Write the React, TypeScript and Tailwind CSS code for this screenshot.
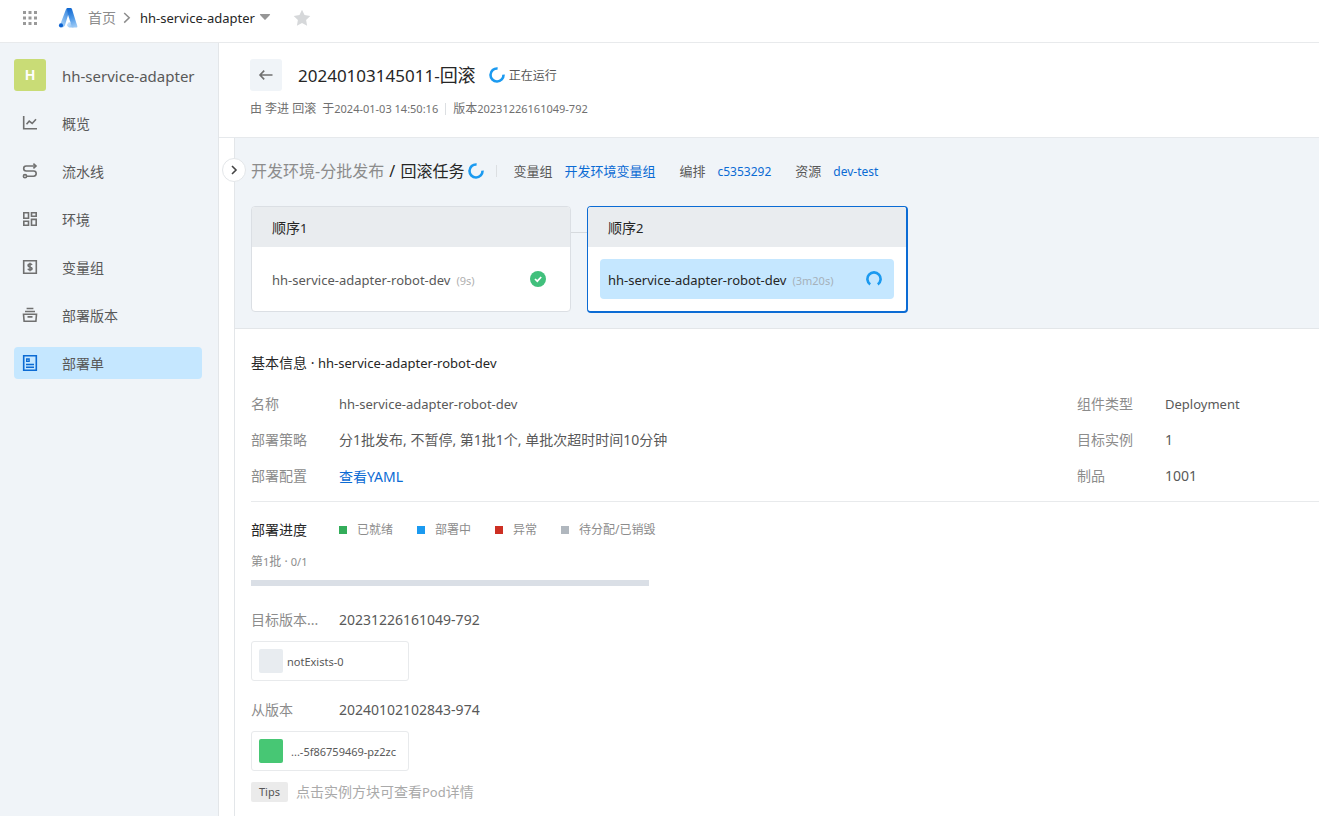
import type { ReactNode } from "react";

const LATIN_12 = "text-[11px]";

function Spinner({ className, dash }: { className: string; dash: string }) {
  return (
    <svg viewBox="0 0 16 16" className={className} fill="none" aria-hidden="true">
      <path d={dash} stroke="#1b9af0" strokeWidth="2.6" />
    </svg>
  );
}

const ARC_RIGHT_OPEN = "M8.6 1.500A6.500 6.500 0 1 0 14.500 7.600";
const ARC_BOTTOM_OPEN = "M4.2 13.4A6.6 6.6 0 1 1 11.8 13.4";

function Icon({ children }: { children: ReactNode }) {
  return (
    <svg viewBox="0 0 16 16" className="size-4 shrink-0" fill="none" stroke="currentColor" strokeWidth="1.6" aria-hidden="true">
      {children}
    </svg>
  );
}

const NAV = [
  {
    label: "概览",
    icon: (
      <Icon>
        <path d="M1.7 1v12.8H15" />
        <path d="M4.5 9.3 7.2 6.2l3 2.3L14 4.3" />
      </Icon>
    ),
  },
  {
    label: "流水线",
    icon: (
      <Icon>
        <path d="M13.5 3H4.2a2.5 2.5 0 0 0 0 5h7.4a2.6 2.6 0 0 1 0 5.2H4.6" />
        <path d="M11.4.6 14 3l-2.6 2.4" />
        <circle cx="3" cy="13.2" r="1.6" />
      </Icon>
    ),
  },
  {
    label: "环境",
    icon: (
      <Icon>
        <path d="M1.800 1.800h4.700v5.400H1.800zM9.500 1.800h4.700v3.400H9.500zM1.800 10.300h4.700v3.900H1.800zM9.500 8.400h4.700v5.800H9.500z" />
      </Icon>
    ),
  },
  {
    label: "变量组",
    icon: (
      <Icon>
        <path d="M1.7 1.7h12.6v12.6H1.7z" />
        <path d="M10 5.9C9.6 5.2 9 5 8 5c-1.2 0-1.9.5-1.9 1.4C6.100 7.400 7 7.700 8 8c1.200.300 2 .700 2 1.600S9.200 11 8 11s-1.800-.400-2.100-1.200M8 3.800v8.400" />
      </Icon>
    ),
  },
  {
    label: "部署版本",
    icon: (
      <Icon>
        <path d="M4.600 1.500h6.800M3 4.500h10M1.500 7.200h13l-.600 7H2.100zM5.500 9.900h5" />
      </Icon>
    ),
  },
  {
    label: "部署单",
    active: true,
    icon: (
      <Icon>
        <path d="M1.700.800h12.600v14.400H1.700z" />
        <path d="M4.700 4h2.400v2.400H4.700z" strokeWidth="1.400" />
        <path d="M4 9.500h8M4 12.200h8" />
      </Icon>
    ),
  },
];

function Topbar() {
  return (
    <header className="flex h-[43px] items-center border-b border-[#e8eaec] bg-white pb-1.5 pl-[22px]">
      <button type="button" aria-label="应用列表" className="text-[#9a9a9a]">
        <svg viewBox="0 0 16 16" className="size-4" fill="currentColor" aria-hidden="true">
          <path d="M1 1h3v3H1zM6.500 1h3v3h-3zM12 1h3v3h-3zM1 6.500h3v3H1zM6.500 6.500h3v3h-3zM12 6.500h3v3h-3zM1 12h3v3H1zM6.500 12h3v3h-3zM12 12h3v3h-3z" />
        </svg>
      </button>
      <a href="#home" aria-label="Logo" className="ml-5">
        <svg viewBox="0 0 20 22" className="h-[22px] w-5" aria-hidden="true">
          <defs>
            <linearGradient id="leg" x1="0.300" y1="0" x2="0.500" y2="1">
              <stop offset="0" stopColor="#0f66d0" />
              <stop offset="0.550" stopColor="#4f9ae8" />
              <stop offset="1" stopColor="#9cc9f5" />
            </linearGradient>
            <linearGradient id="arm" x1="0.800" y1="0" x2="0.200" y2="1">
              <stop offset="0" stopColor="#2f80dc" />
              <stop offset="1" stopColor="#a9d4fa" />
            </linearGradient>
            <linearGradient id="fold" x1="0" y1="0" x2="1" y2="0.600">
              <stop offset="0" stopColor="#d3e8fc" />
              <stop offset="1" stopColor="#8dc0f4" />
            </linearGradient>
          </defs>
          <path d="M8 2.200C8.300 1.400 9 1 9.800 1h2.400L7.200 17.500c-.500 1.700-1.500 2.700-2.900 3L2.600 16.500z" fill="url(#arm)" />
          <path d="M10.600 15.200q3-.700 5 5.400h-3.200c-1.600 0-2.600-.800-3.600-2.600z" fill="url(#fold)" />
          <path d="M9 1.300Q9.300 1 9.800 1h2.400c.900 0 1.600.500 1.900 1.400l5.200 16.500c.300 1-.300 1.700-1.300 1.700h-2.600c-.800 0-1.300-.400-1.600-1.200L9.800 7z" fill="url(#leg)" />
          <circle cx="3" cy="18.400" r="2.100" fill="#0b62d0" />
        </svg>
      </a>
      <nav className="flex items-center text-sm text-[#262626]">
        <a href="#home" className="ml-2.5 text-[#8c8c8c]">首页</a>
        <svg viewBox="0 0 8 12" className="ml-[7px] h-3 w-2" fill="none" stroke="#8c8c8c" strokeWidth="1.500" aria-hidden="true">
          <path d="m1.200 1 5 4.800-5 4.800" />
        </svg>
        <button type="button" className="ml-[9px] flex items-center gap-1 text-[13px]">
          hh-service-adapter
          <svg viewBox="0 0 12 8" className="mb-0.5 h-2 w-3" fill="#969696" aria-hidden="true">
            <path d="M1.500 1h9q1 .2.400 1L6.600 6.600q-.600.600-1.200 0L1.100 2q-.600-.800.400-1z" />
          </svg>
        </button>
      </nav>
      <button type="button" aria-label="收藏" className="ml-[22px]">
        <svg viewBox="0 0 18 18" className="size-[18px]" fill="#d6d8da" aria-hidden="true">
          <path d="m9 .8 2.500 5.300 5.800.800-4.200 4.100 1 5.800L9 14l-5.100 2.800 1-5.800L.700 6.900l5.800-.800z" />
        </svg>
      </button>
    </header>
  );
}

function Sidebar() {
  return (
    <aside className="w-[219px] shrink-0 border-r border-[#e3e6e9] bg-[#f0f4f8] pt-4 pr-4 pl-3.5">
      <div className="flex h-8 items-center gap-4">
        <span className="flex size-8 items-center justify-center rounded-[3px] bg-[#c9dc76] font-['Liberation_Sans'] text-sm font-bold text-white">H</span>
        <span className="pt-0.5 text-[15px] whitespace-nowrap text-[#595959]">hh-service-adapter</span>
      </div>
      <nav className="mt-4 flex flex-col gap-4">
        {NAV.map((item) => (
          <a
            key={item.label}
            href="#nav"
            className={
              item.active
                ? "flex h-8 items-center gap-6 rounded-[4px] bg-[#c5e7ff] pl-2 text-[#0b6bd4]"
                : "flex h-8 items-center gap-6 pl-2 text-[#707070]"
            }
          >
            {item.icon}
            <span className="pt-0.5 text-sm text-[#595959]">{item.label}</span>
          </a>
        ))}
      </nav>
    </aside>
  );
}

function RunHeader() {
  return (
    <div className="flex h-[95px] flex-col border-b border-[#e6e9ec] bg-white pt-4 pl-[31px]">
      <div className="flex h-8 items-center">
        <button type="button" aria-label="返回" className="flex size-8 items-center justify-center rounded-[3px] bg-[#f0f4f8]">
          <svg viewBox="0 0 16 12" className="h-3 w-4" fill="none" stroke="#707070" strokeWidth="1.600" aria-hidden="true">
            <path d="M14.500 6H2.200M6.200 1.600 2 6l4.200 4.400" />
          </svg>
        </button>
        <h1 className="ml-4 text-lg text-[#262626]">
          <span className="text-[17px]">20240103145011-</span>回滚
        </h1>
        <Spinner className="ml-[13px] size-4" dash={ARC_RIGHT_OPEN} />
        <span className="ml-1 pt-0.5 text-xs text-[#595959]">正在运行</span>
      </div>
      <div className="mt-2 flex h-5 items-center text-xs whitespace-pre text-[#707070]">
        <span>由 李进 回滚</span>
        <span className="ml-1.5">于<span className={LATIN_12}>2024-01-03 14:50:16</span></span>
        <span className="mx-[7px] h-3 w-px bg-[#dcdfe2]" />
        <span>版本<span className={LATIN_12}>20231226161049-792</span></span>
      </div>
    </div>
  );
}

function Pipeline() {
  return (
    <section className="border-b border-[#e3e6e9] bg-[#f0f4f8] pt-[21px] pb-[15px] pl-4">
      <div className="flex h-6 items-center text-[13px] whitespace-nowrap text-[#595959]">
        <h2 className="text-base text-[#262626]">
          <span className="text-[#8c8c8c]">开发环境-分批发布</span>{" "}
          <span className="px-px">/</span> 回滚任务
        </h2>
        <Spinner className="ml-1 size-4" dash={ARC_RIGHT_OPEN} />
        <span className="mr-4 ml-3 h-3 w-px bg-[#dcdfe2]" />
        <dl className="flex items-center gap-6 pt-0.5">
          <div className="flex items-center gap-3">
            <dt>变量组</dt>
            <dd><a href="#vars" className="text-[#0b6bd4]">开发环境变量组</a></dd>
          </div>
          <div className="flex items-center gap-3">
            <dt>编排</dt>
            <dd><a href="#layout" className="text-xs text-[#0b6bd4]">c5353292</a></dd>
          </div>
          <div className="flex items-center gap-3">
            <dt>资源</dt>
            <dd><a href="#resource" className="text-xs text-[#0b6bd4]">dev-test</a></dd>
          </div>
        </dl>
      </div>
      <div className="mt-[23px] flex">
        <article className="h-[106px] w-80 overflow-hidden rounded-[4px] border border-[#dbdfe4] bg-white">
          <h3 className="flex h-10 items-center bg-[#e9ecef] pt-0.5 pl-5 text-sm text-[#262626]">
            顺序<span className="text-[13px]">1</span>
          </h3>
          <div className="flex h-16 items-center pr-6 pl-5">
            <span className="pt-1 text-[13px] text-[#595959]">hh-service-adapter-robot-dev</span>
            <span className="ml-1.5 pt-1 text-[11px] text-[#b0b0b0]">(9s)</span>
            <svg viewBox="0 0 16 16" className="ml-auto size-4" aria-hidden="true">
              <circle cx="8" cy="8" r="8" fill="#41c07c" />
              <path d="m5 8 2.300 2.200L11.200 6" fill="none" stroke="#fff" strokeWidth="1.700" />
            </svg>
          </div>
        </article>
        <span className="mt-[26px] h-px w-4 bg-[#d6dade]" />
        <article className="h-[107px] w-[321px] overflow-hidden rounded-[4px] border border-r-2 border-b-2 border-[#0b6bd4] bg-white">
          <h3 className="flex h-10 items-center bg-[#e9ecef] pt-0.5 pl-5 text-sm text-[#262626]">
            顺序<span className="text-[13px]">2</span>
          </h3>
          <button type="button" className="mx-3 mt-3 flex h-10 w-[294px] items-center rounded-[4px] bg-[#c5e7ff] pr-3 pl-2">
            <span className="pt-1 text-[13px] text-[#262626]">hh-service-adapter-robot-dev</span>
            <span className="ml-1.5 pt-1 text-[11px] text-[#a6b1ba]">(3m20s)</span>
            <Spinner className="ml-auto size-4" dash={ARC_BOTTOM_OPEN} />
          </button>
        </article>
      </div>
    </section>
  );
}

function Field({ label, children }: { label: string; children: ReactNode }) {
  return (
    <div className="flex h-9 items-center">
      <dt className="w-[88px] shrink-0 text-[#8c8c8c]">{label}</dt>
      <dd>{children}</dd>
    </div>
  );
}

function BasicInfo() {
  return (
    <section className="ml-4 border-b border-[#e8eaec] pt-6 pb-[7px] text-sm text-[#595959]">
      <h2 className="h-[21px] text-[#262626]">
        基本信息 · <span className="text-[13px]">hh-service-adapter-robot-dev</span>
      </h2>
      <div className="mt-3 flex">
        <dl className="grow">
          <Field label="名称"><span className="text-[13px]">hh-service-adapter-robot-dev</span></Field>
          <Field label="部署策略">分1批发布, 不暂停, 第1批1个, 单批次超时时间10分钟</Field>
          <Field label="部署配置"><a href="#yaml" className="block pt-0.5 text-[#0b6bd4]">查看YAML</a></Field>
        </dl>
        <dl className="w-[242px] shrink-0">
          <Field label="组件类型"><span className="text-[13px]">Deployment</span></Field>
          <Field label="目标实例">1</Field>
          <Field label="制品">1001</Field>
        </dl>
      </div>
    </section>
  );
}

function Legend({ color, children }: { color: string; children: ReactNode }) {
  return (
    <li className="flex items-center gap-2.5">
      <span className={`size-2 ${color}`} />
      {children}
    </li>
  );
}

function Progress() {
  return (
    <section className="pl-4 text-sm text-[#595959]">
      <div className="mt-[18px] flex h-5 items-center">
        <h2 className="w-[88px] text-[#262626]">部署进度</h2>
        <ul className="flex gap-6 text-xs text-[#8c8c8c]">
          <Legend color="bg-[#33ad5a]">已就绪</Legend>
          <Legend color="bg-[#1b9af0]">部署中</Legend>
          <Legend color="bg-[#cd2f23]">异常</Legend>
          <Legend color="bg-[#b0b7be]">待分配/已销毁</Legend>
        </ul>
      </div>
      <div className="mt-3 h-5 text-xs leading-5 text-[#8c8c8c]">
        第<span className={LATIN_12}>1</span>批 · <span className={LATIN_12}>0/1</span>
      </div>
      <div className="mt-2 h-1.5 w-[398px] bg-[#dadfe6]" />
      <dl className="mt-4"><Field label="目标版本...">20231226161049-792</Field></dl>
      <button type="button" className="mt-[3px] flex h-10 w-[158px] items-center gap-1 rounded-[3px] border border-[#e8eaec] pl-[7px] text-[11px]">
        <span className="size-6 rounded-[2px] bg-[#e8ecf0]" />
        <span className="pt-0.5">notExists-0</span>
      </button>
      <dl className="mt-[11px]"><Field label="从版本">20240102102843-974</Field></dl>
      <button type="button" className="mt-[3px] flex h-10 w-[158px] items-center gap-2 rounded-[3px] border border-[#e8eaec] pl-[7px] text-[11px]">
        <span className="size-6 rounded-[2px] bg-[#47c774]" />
        <span className="pt-0.5">...-5f86759469-pz2zc</span>
      </button>
      <div className="mt-2.5 mb-3 flex items-center gap-2 text-[#aaa]">
        <span className="flex h-5 items-center rounded-[2px] bg-[#ebebeb] px-2 pt-px text-[11px] text-[#555]">Tips</span>
        <span className="pt-px">点击实例方块可查看<span className="text-[13px]">Pod</span>详情</span>
      </div>
    </section>
  );
}

export default function App() {
  return (
    <div className="flex min-h-screen flex-col bg-white font-['Noto_Sans','Noto_Sans_CJK_SC',sans-serif]">
      <Topbar />
      <div className="flex grow">
        <Sidebar />
        <main className="flex min-w-0 grow flex-col">
          <RunHeader />
          <div className="flex grow">
            <div className="relative w-4 shrink-0 border-r border-[#e3e6e9]">
              <button type="button" aria-label="展开" className="absolute top-5 left-[3px] flex size-6 items-center justify-center rounded-full border border-[#e3e6e9] bg-white">
                <svg viewBox="0 0 8 10" className="h-2.5 w-2" fill="none" stroke="#444" strokeWidth="1.600" aria-hidden="true">
                  <path d="m2 1 4 4-4 4" />
                </svg>
              </button>
            </div>
            <div className="min-w-0 grow">
              <Pipeline />
              <BasicInfo />
              <Progress />
            </div>
          </div>
        </main>
      </div>
    </div>
  );
}
